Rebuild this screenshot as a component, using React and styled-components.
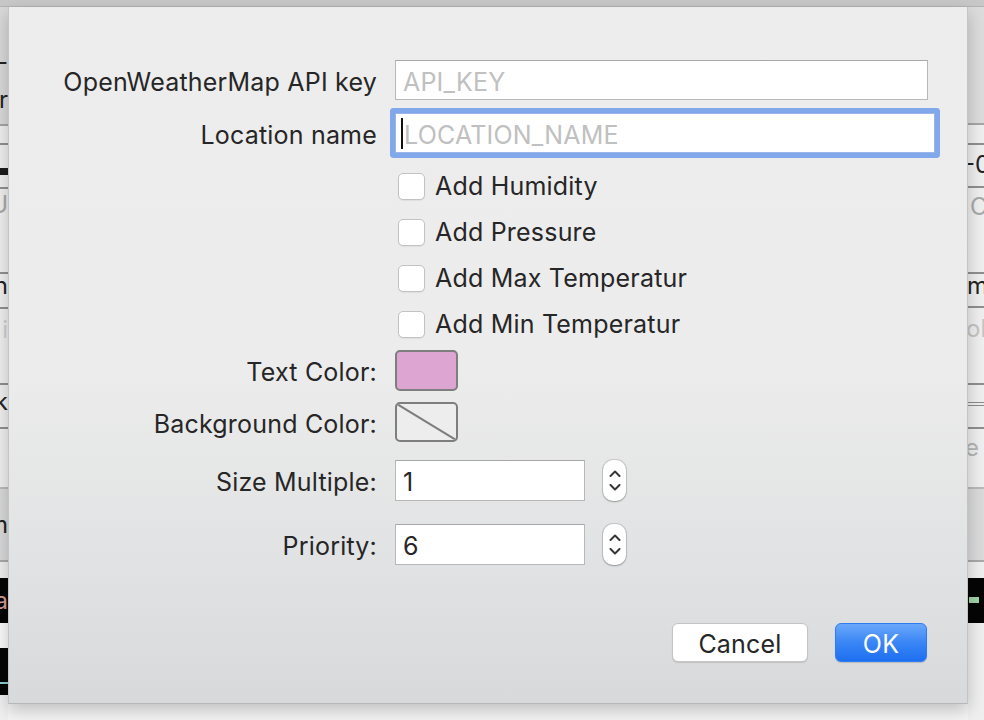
import React from 'react';
import styled, { createGlobalStyle, css } from 'styled-components';

const FONT = `Inter, "Liberation Sans", "Helvetica Neue", sans-serif`;

const Global = createGlobalStyle`
  html, body { margin: 0; padding: 0; }
  body {
    width: 984px; height: 720px; overflow: hidden;
    background: #f3f3f3;
    font-family: ${FONT};
    -webkit-font-smoothing: antialiased;
  }
  * { box-sizing: border-box; }
`;

const Window = styled.div`
  width: 984px;
  height: 720px;
  display: flex;
  flex-direction: column;
  overflow: hidden;
  background: #f3f3f3;
`;

const Toolbar = styled.div`
  flex: none;
  height: 7px;
  background: #c8c8c8;
  border-bottom: 1px solid #b3b3b3;
`;

const Body = styled.div`
  flex: 1;
  min-height: 0;
  display: grid;
  grid-template-columns: 8px 960px 16px;
`;

const Strip = styled.div`
  display: flex;
  flex-direction: column;
  overflow: hidden;
  background: #efefef;
`;

const StripRow = styled.div`
  flex: ${p => (p.$fill ? '1' : 'none')};
  height: ${p => (p.$h ? `${p.$h}px` : 'auto')};
  background: ${p => p.$bg || 'transparent'};
  border-bottom: ${p => p.$line || 0}px solid ${p => p.$lineColor || '#8f8f8f'};
  display: flex;
  flex-direction: column;
  justify-content: ${p => p.$justify || 'flex-start'};
  align-items: ${p => (p.$side === 'left' ? 'flex-end' : 'flex-start')};
  overflow: hidden;
  white-space: nowrap;
`;

const StripText = styled.span`
  display: block;
  font-size: 24px;
  line-height: 24px;
  color: ${p => p.$c || '#222'};
  margin-top: ${p => p.$mt || 0}px;
  ${p => p.$shift && css`margin-left: ${p.$shift}px;`}
`;

const StripBar = styled.div`
  width: ${p => p.$w || 16}px;
  height: ${p => p.$h}px;
  background: ${p => p.$c};
  margin-top: ${p => p.$mt || 0}px;
  margin-left: ${p => p.$ml || 0}px;
`;

const Middle = styled.div`
  display: flex;
  flex-direction: column;
`;

const Sheet = styled.div`
  position: relative;
  z-index: 1;
  flex: none;
  height: 697px;
  padding-top: 53px;
  display: flex;
  flex-direction: column;
  background: linear-gradient(180deg, #ededed 0%, #ececec 52%, #e1e2e3 80%, #d8d9db 100%);
  border-left: 1px solid #c4c4c4;
  border-right: 1px solid #c4c4c4;
  border-bottom: 1px solid #b8b8b8;
  box-shadow: 0 6px 16px rgba(0, 0, 0, 0.22);
`;

const Below = styled.div`
  flex: 1;
  background: #f4f4f4;
`;

const Row = styled.div`
  flex: none;
  display: grid;
  grid-template-columns: 368px 1fr;
  column-gap: 18px;
  align-items: center;
  height: ${p => p.$h}px;
  margin-top: ${p => p.$mt || 0}px;
`;

const Label = styled.div`
  text-align: right;
  font-size: 25px;
  letter-spacing: 0.2px;
  padding-top: 3px;
  color: #262626;
  white-space: nowrap;
`;

const Controls = styled.div`
  display: flex;
  align-items: center;
`;

const Field = styled.div`
  width: ${p => p.$w}px;
  height: ${p => p.$h || 40}px;
  background: #fff;
  border: 1px solid #b8b8b8;
  border-top-color: #a8a8a8;
  display: flex;
  align-items: center;
  padding-left: 7px;
  padding-top: 3px;
  font-size: 25px;
  letter-spacing: 0.2px;
  color: #262626;
  ${p => p.$focused && css`
    border-color: #9ab5e6;
    border-radius: 1px;
    box-shadow: 0 0 0 5px #80a8ea;
    padding-left: 5px;
  `}
`;

const Placeholder = styled.span`
  color: #c0c0c0;
  white-space: nowrap;
`;

const Caret = styled.span`
  width: 2px;
  height: 31px;
  margin-top: -3px;
  background: #111;
  margin-right: 1px;
  flex: none;
`;

const CheckItem = styled.label`
  display: flex;
  align-items: center;
  gap: 10px;
  margin-left: 3px;
  font-size: 25px;
  letter-spacing: 0.2px;
  color: #262626;
`;

const CheckBox = styled.span`
  width: 27px;
  height: 27px;
  border-radius: 5px;
  background: #fff;
  border: 1px solid #c2c2c2;
  box-shadow: 0 1px 1px rgba(0, 0, 0, 0.06);
  flex: none;
`;

const Swatch = styled.div`
  width: 63px;
  height: ${p => p.$h || 41}px;
  border: 2px solid #7e7e7e;
  border-radius: 5px;
  background: ${p => p.$color || 'transparent'};
  overflow: hidden;
  display: flex;
  svg { display: block; }
`;

const Stepper = styled.div`
  width: 23px;
  height: 41px;
  margin-left: 18px;
  border-radius: 10px;
  background: #fff;
  box-shadow: 0 0 0 1px rgba(0, 0, 0, 0.12), 0 1px 2px rgba(0, 0, 0, 0.22);
  display: flex;
  flex-direction: column;
  align-items: center;
  justify-content: center;
  gap: 7px;
  svg { display: block; }
`;

const ButtonBar = styled.div`
  flex: none;
  display: flex;
  justify-content: flex-end;
  gap: 27px;
  padding-right: 40px;
  margin-top: ${p => p.$mt}px;
`;

const Button = styled.button`
  height: 39px;
  width: ${p => p.$w}px;
  border-radius: 6px;
  font-family: ${FONT};
  font-size: 25px;
  letter-spacing: 0.2px;
  padding: 3px 0 0;
  cursor: default;
  ${p => p.$primary ? css`
    color: #fff;
    border: 1px solid #2f7cf0;
    background: linear-gradient(180deg, #6ba7fa 0%, #3a86f6 50%, #1e6ff1 100%);
    box-shadow: 0 1px 1px rgba(0, 0, 0, 0.15);
  ` : css`
    color: #262626;
    background: #fff;
    border: 1px solid #c4c4c4;
    box-shadow: 0 1px 1px rgba(0, 0, 0, 0.12);
  `}
`;

const Chevron = ({ up }) => (
  <svg width="12" height="7" viewBox="0 0 12 7">
    <path
      d={up ? 'M1.5 6 L6 1.5 L10.5 6' : 'M1.5 1 L6 5.5 L10.5 1'}
      fill="none"
      stroke="#363636"
      strokeWidth="2"
      strokeLinecap="round"
      strokeLinejoin="round"
    />
  </svg>
);

const NumberRow = ({ label, value, mt }) => (
  <Row $h={42} $mt={mt}>
    <Label>{label}</Label>
    <Controls>
      <Field $w={190} $h={41}>{value}</Field>
      <Stepper>
        <Chevron up />
        <Chevron />
      </Stepper>
    </Controls>
  </Row>
);

const checks = ['Add Humidity', 'Add Pressure', 'Add Max Temperatur', 'Add Min Temperatur'];

export default function App() {
  return (
    <>
      <Global />
      <Window>
        <Toolbar />
        <Body>
          <Strip>
            <StripRow $side="left" $h={119} $bg="#d9d9d9" $line={2} $lineColor="#a4a4a4">
              <StripText $mt={43}>-</StripText>
              <StripText $mt={14}>r</StripText>
            </StripRow>
            <StripRow $side="left" $h={19} $line={2} />
            <StripRow $side="left" $h={44} $line={2}>
              <StripBar $h={7} $c="#1c1c1c" $mt={23} />
            </StripRow>
            <StripRow $side="left" $h={85} $line={2}>
              <StripText $mt={4} $c="#a9a9a9">U</StripText>
            </StripRow>
            <StripRow $side="left" $h={35} $line={2}>
              <StripText $mt={0}>n</StripText>
            </StripRow>
            <StripRow $side="left" $h={76} $line={2}>
              <StripText $mt={9} $c="#cfcfcf">i</StripText>
            </StripRow>
            <StripRow $side="left" $h={44} $line={2}>
              <StripText $mt={5}>k</StripText>
            </StripRow>
            <StripRow $side="left" $h={60} $line={2} $lineColor="#b9b9b9" />
            <StripRow $side="left" $h={73} $bg="#d9d9d9" $line={2} $lineColor="#a9a9a9" $justify="center">
              <StripText>m</StripText>
            </StripRow>
            <StripRow $side="left" $h={16} />
            <StripRow $side="left" $h={45} $bg="#050505" $justify="center">
              <StripText $c="#d89a9a">a</StripText>
            </StripRow>
            <StripRow $side="left" $h={25} $bg="#fafafa" />
            <StripRow $side="left" $h={47} $bg="#050505">
              <StripBar $h={2} $c="#8ccfd0" $mt={34} />
            </StripRow>
            <StripRow $side="left" $fill />
          </Strip>

          <Middle>
            <Sheet>
              <Row $h={40}>
                <Label>OpenWeatherMap API key</Label>
                <Controls>
                  <Field $w={533}>
                    <Placeholder>API_KEY</Placeholder>
                  </Field>
                </Controls>
              </Row>
              <Row $h={50} $mt={8}>
                <Label>Location name</Label>
                <Controls>
                  <Field $w={540} $focused>
                    <Caret />
                    <Placeholder>LOCATION_NAME</Placeholder>
                  </Field>
                </Controls>
              </Row>
              {checks.map((c, i) => (
                <Row key={c} $h={46} $mt={i === 0 ? 5 : 0}>
                  <span />
                  <CheckItem>
                    <CheckBox />
                    {c}
                  </CheckItem>
                </Row>
              ))}
              <Row $h={41} $mt={3}>
                <Label>Text Color:</Label>
                <Controls>
                  <Swatch $color="#dca5d2" />
                </Controls>
              </Row>
              <Row $h={40} $mt={11}>
                <Label>Background Color:</Label>
                <Controls>
                  <Swatch $h={40} $color="#ededed">
                    <svg width="59" height="36" viewBox="0 0 59 36" preserveAspectRatio="none">
                      <line x1="0" y1="0" x2="59" y2="36" stroke="#7e7e7e" strokeWidth="2" />
                    </svg>
                  </Swatch>
                </Controls>
              </Row>
              <NumberRow label="Size Multiple:" value="1" mt={17} />
              <NumberRow label="Priority:" value="6" mt={22} />
              <ButtonBar $mt={58}>
                <Button $w={136}>Cancel</Button>
                <Button $w={92} $primary>OK</Button>
              </ButtonBar>
            </Sheet>
            <Below />
          </Middle>

          <Strip>
            <StripRow $side="right" $h={118} $bg="#dcdcdc" $line={2} $lineColor="#a6a6a6" />
            <StripRow $side="right" $h={20} $line={2} />
            <StripRow $side="right" $h={43} $line={2}>
              <StripText $mt={8} $shift={-4}>-0</StripText>
            </StripRow>
            <StripRow $side="right" $h={86} $line={2}>
              <StripText $mt={7} $c="#a9a9a9" $shift={2}>C</StripText>
            </StripRow>
            <StripRow $side="right" $h={34} $line={2}>
              <StripText $mt={0} $shift={-1}>m</StripText>
            </StripRow>
            <StripRow $side="right" $h={77} $line={2}>
              <StripText $mt={9} $c="#c4c4c4" $shift={-2}>ob</StripText>
            </StripRow>
            <StripRow $side="right" $h={44} $line={2}>
              <StripBar $h={1} $c="#8a8a8a" $mt={17} />
              <StripBar $h={1} $c="#8a8a8a" $mt={2} />
            </StripRow>
            <StripRow $side="right" $h={60} $line={2} $lineColor="#b9b9b9">
              <StripText $mt={7} $c="#b5b5b5" $shift={-3}>e s</StripText>
            </StripRow>
            <StripRow $side="right" $h={73} $bg="#dadada" $line={2} $lineColor="#a9a9a9" />
            <StripRow $side="right" $h={16} />
            <StripRow $side="right" $h={45} $bg="#050505">
              <StripBar $w={10} $h={6} $c="#9fd3a6" $mt={19} $ml={1} />
            </StripRow>
            <StripRow $side="right" $fill />
          </Strip>
        </Body>
      </Window>
    </>
  );
}
